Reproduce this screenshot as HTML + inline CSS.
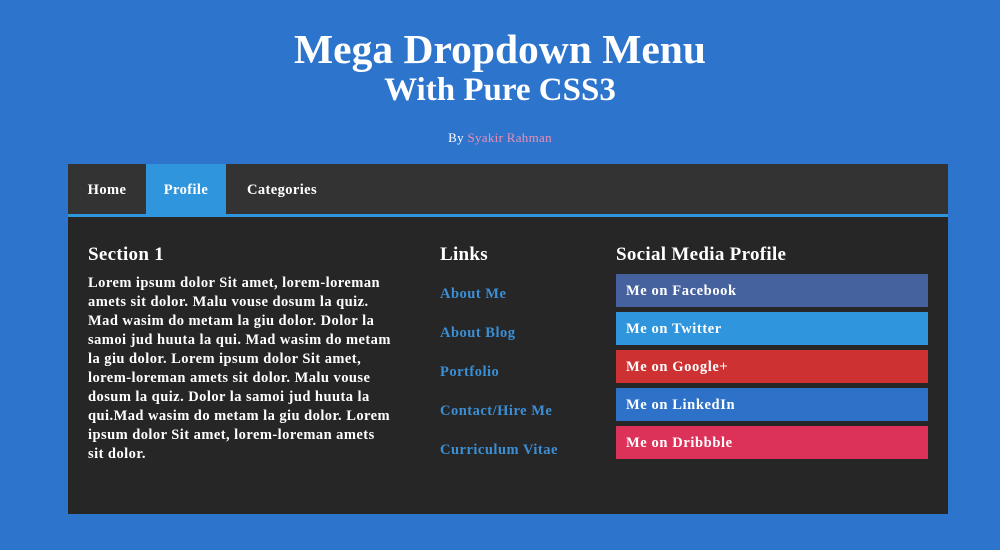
<!DOCTYPE html>
<html><head><meta charset="utf-8"><style>
*{margin:0;padding:0;box-sizing:border-box}
body{width:1000px;height:550px;background:#2d74cc;font-family:"Liberation Serif","DejaVu Serif",serif;color:#fff;position:relative;overflow:hidden}
h1{position:absolute;top:26px;left:0;width:1000px;text-align:center;font-size:41.5px;line-height:46px;font-weight:bold}
h2{position:absolute;top:71px;left:0;width:1000px;text-align:center;font-size:33px;line-height:38px;font-weight:bold}
.by{position:absolute;top:130px;left:0;width:1000px;text-align:center;font-size:13px;letter-spacing:0.3px}
.by span{color:#f08db0}
.nav{position:absolute;left:68px;top:164px;width:880px;height:50px;background:#333}
.nav div{position:absolute;top:0;height:50px;line-height:52px;font-size:14.5px;font-weight:bold;text-align:center;letter-spacing:0.4px}
.line{position:absolute;left:68px;top:214px;width:880px;height:3px;background:#2f95dc}
.panel{position:absolute;left:68px;top:217px;width:880px;height:297px;background:#262626}
.hd{position:absolute;font-size:19px;font-weight:bold;top:244px;letter-spacing:0.3px}
.txt{position:absolute;left:88px;top:274px;width:306px;font-size:14.5px;line-height:19px;font-weight:bold;letter-spacing:0.45px}
.lk{position:absolute;left:440px;font-size:14.5px;color:#3a8fd6;font-weight:bold;letter-spacing:0.5px}
.btn{position:absolute;left:616px;width:312px;height:33px;line-height:34px;padding-left:10px;font-size:14.5px;font-weight:bold;letter-spacing:0.6px}
</style></head><body>
<h1>Mega Dropdown Menu</h1>
<h2>With Pure CSS3</h2>
<div class="by">By <span>Syakir Rahman</span></div>
<div class="nav">
<div style="left:0;width:78px">Home</div>
<div style="left:78px;width:80px;background:#2f95dc">Profile</div>
<div style="left:158px;width:112px">Categories</div>
</div>
<div class="line"></div>
<div class="panel"></div>
<div class="hd" style="left:88px">Section 1</div>
<div class="hd" style="left:440px">Links</div>
<div class="hd" style="left:616px">Social Media Profile</div>
<div class="txt">Lorem ipsum dolor Sit amet, lorem-loreman amets sit dolor. Malu vouse dosum la quiz. Mad wasim do metam la giu dolor. Dolor la samoi jud huuta la qui. Mad wasim do metam la giu dolor. Lorem ipsum dolor Sit amet, lorem-loreman amets sit dolor. Malu vouse dosum la quiz. Dolor la samoi jud huuta la qui.Mad wasim do metam la giu dolor. Lorem ipsum dolor Sit amet, lorem-loreman amets sit dolor.</div>
<div class="lk" style="top:286px">About Me</div>
<div class="lk" style="top:325px">About Blog</div>
<div class="lk" style="top:364px">Portfolio</div>
<div class="lk" style="top:403px">Contact/Hire Me</div>
<div class="lk" style="top:442px">Curriculum Vitae</div>
<div class="btn" style="top:274px;background:#46629e">Me on Facebook</div>
<div class="btn" style="top:312px;background:#2f95dc">Me on Twitter</div>
<div class="btn" style="top:350px;background:#cd3131">Me on Google+</div>
<div class="btn" style="top:388px;background:#2d72c8">Me on LinkedIn</div>
<div class="btn" style="top:426px;background:#dc3259">Me on Dribbble</div>
</body></html>
